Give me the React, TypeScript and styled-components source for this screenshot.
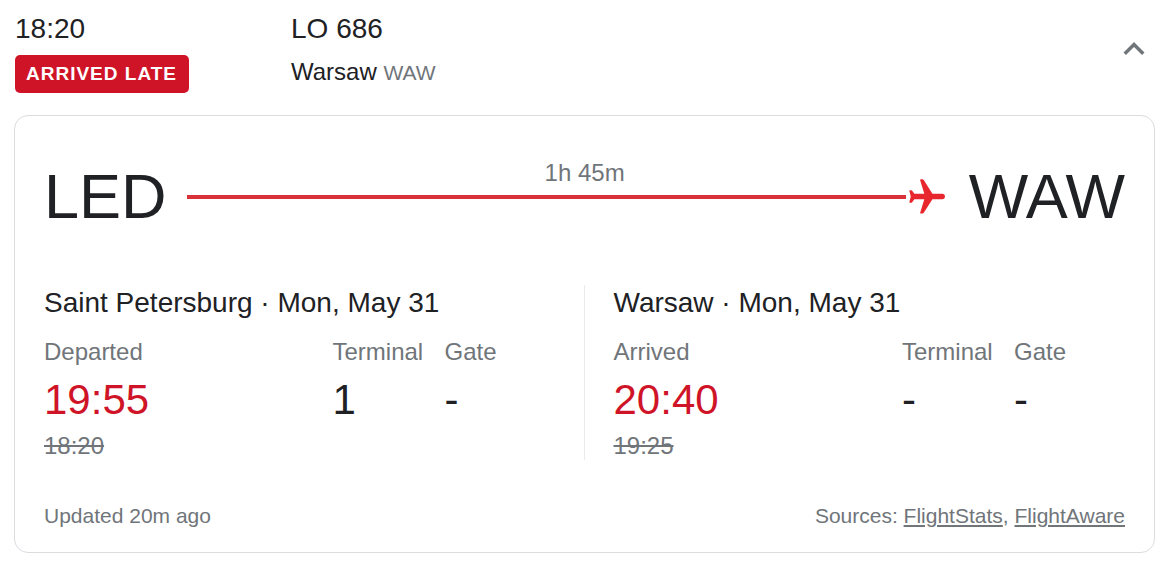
import React from "react";
import styled, { createGlobalStyle } from "styled-components";

const ink = "#202124";
const muted = "#70757a";
const late = "#d01428";

const GlobalStyle = createGlobalStyle`
  *, *::before, *::after { box-sizing: border-box; }
  body {
    margin: 0;
    background: #fff;
    color: ${ink};
    font-family: "Liberation Sans", Arial, sans-serif;
  }
  h2, p, dl, dd { margin: 0; font-weight: 400; }
`;

const Page = styled.main`
  padding: 12px 16px 12px 14px;
`;

const Summary = styled.header`
  display: grid;
  grid-template-columns: 276px 1fr auto;
  align-items: start;
  padding-left: 1px;
`;

const SummaryColumn = styled.div`
  display: flex;
  flex-direction: column;
  align-items: flex-start;
  gap: 9px;
`;

const Headline = styled.p`
  font-size: 28px;
  line-height: 34px;
`;

const Badge = styled.span`
  padding: 0 12px 0 11px;
  border-radius: 5px;
  background: ${late};
  color: #fff;
  font-size: 19px;
  font-weight: 700;
  line-height: 38px;
  letter-spacing: 1px;
`;

const Destination = styled.p`
  font-size: 24px;
  line-height: 34px;
`;

const Code = styled.span`
  color: ${muted};
  font-size: 21px;
`;

const ToggleButton = styled.button`
  display: flex;
  margin-top: 16px;
  padding: 0;
  border: 0;
  background: none;
  color: ${muted};
  cursor: pointer;
`;

const Card = styled.section`
  margin-top: 22px;
  padding: 44px 29px 24px;
  border: 1px solid #dadce0;
  border-radius: 14px;
`;

const Route = styled.div`
  display: flex;
  align-items: center;
`;

const Airport = styled.span`
  font-size: 63px;
  line-height: 72px;
`;

const Path = styled.div`
  display: flex;
  flex: 1;
  flex-direction: column;
  margin: 0 24px 0 20px;
  padding-bottom: 22px;
`;

const Duration = styled.span`
  padding-left: 38px;
  color: ${muted};
  font-size: 24px;
  line-height: 24px;
  text-align: center;
`;

const Track = styled.div`
  display: flex;
  align-items: center;
  gap: 3px;
  height: 24px;
  color: #e8262d;
`;

const Line = styled.span`
  flex: 1;
  height: 4px;
  background: #d9303a;
`;

const Stops = styled.div`
  display: grid;
  grid-template-columns: 1fr 1fr;
  margin-top: 53px;
`;

const Stop = styled.section<{ $divided?: boolean }>`
  padding: ${(p) => (p.$divided ? "0 28px 0 0" : "0 0 0 29px")};
  border-right: ${(p) => (p.$divided ? "1px solid #e8eaed" : "0")};
`;

const StopTitle = styled.h2`
  font-size: 28px;
  line-height: 36px;
`;

const Facts = styled.dl`
  display: grid;
  grid-template-columns: 1fr 112px 111px;
  margin-top: 17px;
`;

const Label = styled.dt`
  color: ${muted};
  font-size: 24px;
  line-height: 28px;
`;

const Value = styled.dd<{ $late?: boolean }>`
  margin-top: 10px;
  color: ${(p) => (p.$late ? late : ink)};
  font-size: 42px;
  line-height: 48px;
`;

const Scheduled = styled.dd`
  margin-top: 8px;
  color: ${muted};
  font-size: 24px;
  line-height: 28px;
`;

const Footer = styled.footer`
  display: flex;
  justify-content: space-between;
  margin-top: 44px;
  color: ${muted};
  font-size: 21px;
  line-height: 24px;
`;

const SourceLink = styled.a`
  color: inherit;
  text-decoration: underline;
`;

const ChevronUp = () => (
  <svg width="42" height="42" viewBox="0 0 24 24" fill="currentColor" aria-hidden="true">
    <path d="M12 8l-6 6 1.41 1.41L12 10.83l4.59 4.58L18 14z" />
  </svg>
);

const Plane = () => (
  <svg width="36" height="36" viewBox="2 2 20 20" fill="currentColor" aria-hidden="true">
    <g transform="translate(0 .2) rotate(90 12 12)">
      <path d="M21 15.4v-.9q0-.4-.4-.7L13 9V3.5c0-.83-.67-1.5-1.5-1.5S10 2.67 10 3.5V9l-7.6 4.8q-.4.3-.4.7v.9q0 .5.5.4L10 13.5V19l-1.8 1.35q-.2.15-.2.4v.75q0 .4.4.3l3.1-.8 3.1.8q.4.1.4-.3v-.75q0-.25-.2-.4L13 19v-5.5l7.5 2.3q.5.1.5-.4z" />
    </g>
  </svg>
);

type StopInfo = {
  city: string;
  date: string;
  status: string;
  actual: string;
  scheduled: string;
  terminal: string;
  gate: string;
};

const stops: StopInfo[] = [
  { city: "Saint Petersburg", date: "Mon, May 31", status: "Departed", actual: "19:55", scheduled: "18:20", terminal: "1", gate: "-" },
  { city: "Warsaw", date: "Mon, May 31", status: "Arrived", actual: "20:40", scheduled: "19:25", terminal: "-", gate: "-" },
];

export default function App() {
  return (
    <Page>
      <GlobalStyle />
      <Summary>
        <SummaryColumn>
          <Headline>18:20</Headline>
          <Badge>ARRIVED LATE</Badge>
        </SummaryColumn>
        <SummaryColumn>
          <Headline>LO 686</Headline>
          <Destination>
            Warsaw <Code>WAW</Code>
          </Destination>
        </SummaryColumn>
        <ToggleButton type="button" aria-label="Collapse flight details" aria-expanded="true">
          <ChevronUp />
        </ToggleButton>
      </Summary>
      <Card>
        <Route>
          <Airport>LED</Airport>
          <Path>
            <Duration>1h 45m</Duration>
            <Track>
              <Line />
              <Plane />
            </Track>
          </Path>
          <Airport>WAW</Airport>
        </Route>
        <Stops>
          {stops.map((stop, index) => (
            <Stop key={stop.city} $divided={index < stops.length - 1}>
              <StopTitle>
                {stop.city} · {stop.date}
              </StopTitle>
              <Facts>
                <div>
                  <Label>{stop.status}</Label>
                  <Value $late>{stop.actual}</Value>
                  <Scheduled>
                    <s>{stop.scheduled}</s>
                  </Scheduled>
                </div>
                <div>
                  <Label>Terminal</Label>
                  <Value>{stop.terminal}</Value>
                </div>
                <div>
                  <Label>Gate</Label>
                  <Value>{stop.gate}</Value>
                </div>
              </Facts>
            </Stop>
          ))}
        </Stops>
        <Footer>
          <span>Updated 20m ago</span>
          <span>
            Sources: <SourceLink href="#flightstats">FlightStats</SourceLink>,{" "}
            <SourceLink href="#flightaware">FlightAware</SourceLink>
          </span>
        </Footer>
      </Card>
    </Page>
  );
}
